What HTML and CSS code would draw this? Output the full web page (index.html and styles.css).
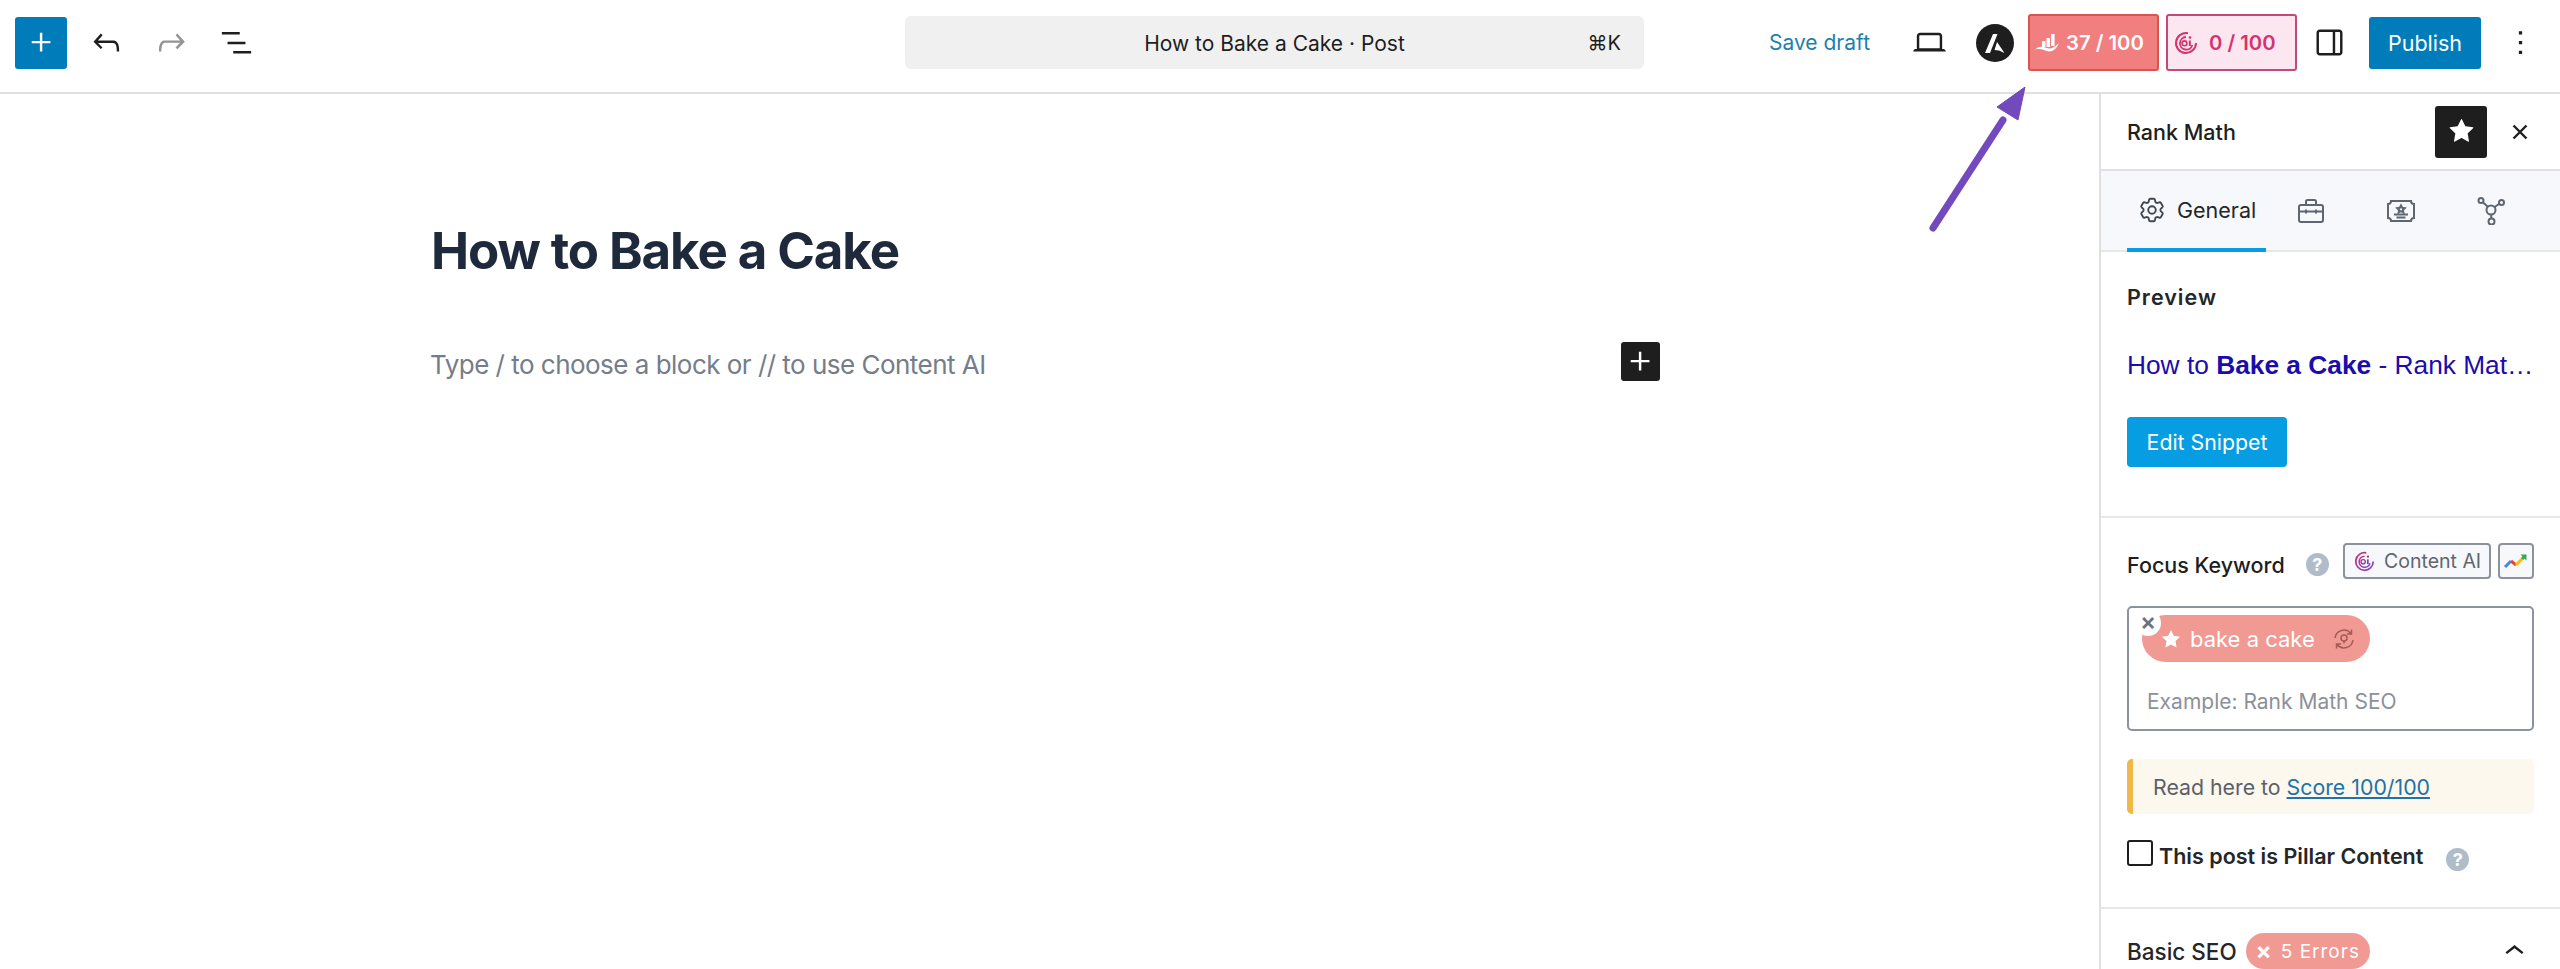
FILE: index.html
```html
<!DOCTYPE html>
<html lang="en">
<head>
<meta charset="utf-8">
<title>How to Bake a Cake</title>
<link rel="stylesheet" href="styles.css">
</head>
<body>
<div class="app">
  <header class="topbar">
    <div class="tools">
      <button class="tb-btn tb-primary"><svg viewBox="0 0 24 24" class="ic39"><path d="M11 12.5V17.5H12.5V12.5H17.5V11H12.5V6H11V11H6V12.5H11Z"/></svg></button>
      <button class="tb-btn"><svg viewBox="0 0 24 24" class="ic39"><path d="M18.3 11.7c-.6-.6-1.4-.9-2.3-.9H6.7l2.9-3.3-1.1-1-4.5 5L8.5 16l1-1-2.7-2.7H16c.5 0 .9.2 1.3.5 1 1 1 3.4 1 4.5v.3h1.5v-.2c0-1.5 0-4.3-1.5-5.7z"/></svg></button>
      <button class="tb-btn tb-disabled"><svg viewBox="0 0 24 24" class="ic39"><path d="M15.6 6.5l-1.1 1 2.9 3.3H8c-.9 0-1.7.3-2.3.9-1.4 1.5-1.4 4.2-1.4 5.6v.2h1.5v-.3c0-1.1 0-3.5 1-4.5.3-.3.7-.5 1.3-.5h9.2L14.5 15l1.1 1.1 4.6-4.6-4.6-5z"/></svg></button>
      <button class="tb-btn"><svg viewBox="0 0 24 24" class="ic39"><path d="M3 5.5h11V7H3V5.5Zm3.5 6h11V13h-11v-1.5ZM21 17.3H10v1.5h11v-1.5Z"/></svg></button>
    </div>
    <div class="command">
      <span class="command-title">How to Bake a Cake · Post</span>
      <span class="command-key">⌘K</span>
    </div>
    <div class="actions">
      <span class="save">Save draft</span>
      <button class="tb-btn laptop"><svg viewBox="0 0 24 24" class="ic39"><path d="M20.5 16h-.7V8c0-1.1-.9-2-2-2H6.2c-1.1 0-2 .9-2 2v8h-.7c-.8 0-1.5.7-1.5 1.5h20c0-.8-.7-1.5-1.5-1.5zM5.7 8c0-.3.2-.5.5-.5h11.6c.3 0 .5.2.5.5v7.6H5.7V8z"/></svg></button>
      <svg class="astra" viewBox="0 0 38 38"><circle cx="19" cy="19" r="19" fill="#1e1e1e"/><path d="M17 10h4.500L14 29H9ZM21 18l7.500 11-5.500-2.500-4.500-.5Z" fill="#fff"/></svg>
      <div class="score score-red">
        <svg viewBox="0 0 24 18" class="rm-logo"><path d="M7 7h3.500v6H7zM11.500 4h3.500v9h-3.500zM16 0h3.600v12H16z" fill="#fff"/><path d="M0 15.500c4-3.500 8-3 11.500-1.500 4.500 1.500 8-.5 12.500-5-3 7-7.500 9.500-12.500 8C8 15.500 5 14.500 0 15.500Z" fill="#fff"/></svg>
        <span>37 / 100</span>
      </div>
      <div class="score score-pink">
        <svg viewBox="0 0 24 24" class="ai-logo"><path d="M14 2.200A10 10 0 1 0 22 12" fill="none" stroke="#d6336c" stroke-width="2"/><path d="M12 6A6.300 6.300 0 1 0 18.300 14" fill="none" stroke="#d6336c" stroke-width="1.800"/><circle cx="10.500" cy="12.300" r="2.400" fill="none" stroke="#d6336c" stroke-width="1.600"/><path d="M15.800 9.500v5.500" stroke="#d6336c" stroke-width="2"/><circle cx="16" cy="6.500" r="1.300" fill="#d6336c"/></svg>
        <span>0 / 100</span>
      </div>
      <button class="tb-btn"><svg viewBox="0 0 24 24" class="ic39"><path d="M18 4H6c-1.100 0-2 .9-2 2v12c0 1.100.9 2 2 2h12c1.100 0 2-.9 2-2V6c0-1.100-.9-2-2-2zm-4 14.500H6c-.3 0-.5-.2-.5-.5V6c0-.3.2-.5.5-.5h8v13zm4.500-.5c0 .3-.2.500-.5.500h-2.500v-13H18c.3 0 .5.200.5.500v12z"/></svg></button>
      <button class="publish">Publish</button>
      <button class="tb-btn"><svg viewBox="0 0 24 24" class="ic39"><path d="M13 19h-2v-2h2v2zm0-6h-2v-2h2v2zm0-6h-2V5h2v2z"/></svg></button>
    </div>
  </header>

  <div class="body">
    <main class="editor">
      <h1 class="post-title">How to Bake a Cake</h1>
      <div class="empty-block">
        <p class="placeholder">Type / to choose a block or // to use Content AI</p>
        <button class="block-add"><svg viewBox="0 0 24 24" class="ic39"><path d="M11 12.5V17.5H12.5V12.5H17.5V11H12.5V6H11V11H6V12.5H11Z"/></svg></button>
      </div>
    </main>

    <aside class="sidebar">
      <div class="side-head">
        <span class="side-name">Rank Math</span>
        <button class="star-btn"><svg viewBox="0 0 24 24" class="ic39"><path d="M11.776 4.454a.25.25 0 01.448 0l2.069 4.192a.25.25 0 00.188.137l4.626.672a.25.25 0 01.139.426l-3.348 3.263a.25.25 0 00-.072.222l.79 4.607a.25.25 0 01-.362.263l-4.138-2.175a.25.25 0 00-.232 0l-4.138 2.175a.25.25 0 01-.363-.263l.79-4.607a.25.25 0 00-.071-.222L4.754 9.881a.25.25 0 01.139-.426l4.626-.672a.25.25 0 00.188-.137l2.069-4.192z"/></svg></button>
        <button class="close-btn"><svg viewBox="0 0 16 16" class="close-ic"><path d="M1.500 1.500l13 13M14.500 1.500l-13 13"/></svg></button>
      </div>

      <nav class="tabs">
        <div class="tab tab-active">
          <svg viewBox="0 0 24 24" class="tab-ic"><path d="M9.594 3.940c.09-.542.56-.94 1.110-.94h2.593c.55 0 1.020.398 1.110.94l.213 1.281c.063.374.313.686.645.870.074.040.147.083.22.127.324.196.72.257 1.075.124l1.217-.456a1.125 1.125 0 011.370.49l1.296 2.247a1.125 1.125 0 01-.26 1.431l-1.003.827c-.293.24-.438.613-.431.992a6.759 6.759 0 010 .255c-.007.378.138.75.43.99l1.005.828c.424.35.534.954.26 1.430l-1.298 2.247a1.125 1.125 0 01-1.369.491l-1.217-.456c-.355-.133-.75-.072-1.076.124a6.570 6.570 0 01-.22.128c-.331.183-.581.495-.644.869l-.213 1.280c-.09.543-.56.941-1.110.941h-2.594c-.55 0-1.020-.398-1.110-.94l-.213-1.281c-.062-.374-.312-.686-.644-.87a6.520 6.520 0 01-.22-.127c-.325-.196-.72-.257-1.076-.124l-1.217.456a1.125 1.125 0 01-1.369-.49l-1.297-2.247a1.125 1.125 0 01.26-1.431l1.004-.827c.292-.24.437-.613.43-.992a6.932 6.932 0 010-.255c.007-.378-.138-.75-.43-.99l-1.004-.828a1.125 1.125 0 01-.26-1.430l1.297-2.247a1.125 1.125 0 011.370-.491l1.216.456c.356.133.751.072 1.076-.124.072-.044.146-.087.22-.128.332-.183.582-.495.644-.869l.214-1.281z"/><circle cx="12" cy="12" r="3"/></svg>
          <span>General</span>
        </div>
        <div class="tab-icon">
          <svg viewBox="0 0 28 26" class="tab-ic2"><rect x="2" y="7" width="24" height="17" rx="2"/><path d="M9 7V3.500A1.500 1.500 0 0 1 10.500 2h7A1.500 1.500 0 0 1 19 3.500V7M2 13.500h24M9 11.500v4M19 11.500v4"/></svg>
        </div>
        <div class="tab-icon">
          <svg viewBox="0 0 30 24" class="tab-ic3"><path d="M5 2h20a3 3 0 0 0 3 3v14a3 3 0 0 0-3 3H5a3 3 0 0 0-3-3V5a3 3 0 0 0 3-3Z"/><path d="M15 6.500l1.200 2.300 2.500.4-1.800 1.700.4 2.400-2.300-1.200-2.300 1.200.4-2.400-1.800-1.700 2.500-.4ZM8 15.500h14M10.500 18.500h9"/></svg>
        </div>
        <div class="tab-icon">
          <svg viewBox="0 0 28 28" class="tab-ic4"><circle cx="14" cy="13" r="4.500"/><circle cx="4" cy="3.500" r="2.500"/><circle cx="24.500" cy="5.500" r="2.500"/><circle cx="14.500" cy="24.500" r="3"/><path d="M5.800 5.200l5 4.500M22.300 6.800l-5 3.500M14.200 17.500v4"/></svg>
        </div>
      </nav>

      <section class="panel panel-preview">
        <h2 class="preview-h">Preview</h2>
        <div class="serp">How to <b>Bake a Cake</b> - Rank Mat…</div>
        <button class="edit-btn">Edit Snippet</button>
      </section>

      <section class="panel panel-focus">
        <div class="focus-row">
          <span class="focus-label">Focus Keyword</span>
          <span class="help help-a">?</span>
          <button class="cai-btn">
            <svg viewBox="0 0 24 24" class="cai-logo"><defs><linearGradient id="g1" x1="0" y1="0" x2="1" y2="1"><stop offset="0" stop-color="#d1267c"/><stop offset="1" stop-color="#7c4dca"/></linearGradient></defs><path d="M14 2.200A10 10 0 1 0 22 12" fill="none" stroke="url(#g1)" stroke-width="2"/><path d="M12 6A6.300 6.300 0 1 0 18.300 14" fill="none" stroke="url(#g1)" stroke-width="1.800"/><circle cx="10.500" cy="12.300" r="2.400" fill="none" stroke="#8b3bab" stroke-width="1.600"/><path d="M15.800 9.500v5.500" stroke="#8b3bab" stroke-width="2"/><circle cx="16" cy="6.500" r="1.300" fill="#a0309b"/></svg>
            <span>Content AI</span>
          </button>
          <button class="trend-btn">
            <svg viewBox="0 0 26 18" class="trend"><path d="M2 15l6-6" stroke="#4285f4"/><path d="M8 9l5 4" stroke="#ea4335"/><path d="M13 13l6-6" stroke="#fbbc04"/><path d="M19 7l3-3" stroke="#34a853"/><path d="M17.500 2.500h6v6z" fill="#34a853" stroke="none"/></svg>
          </button>
        </div>
        <div class="kw-box">
          <div class="pill">
            <span class="pill-x">×</span>
            <svg viewBox="0 0 24 24" class="pill-star"><path d="M12 3l2.800 5.800 6.300.9-4.600 4.400 1.100 6.300L12 17.400 6.400 20.400l1.100-6.300L2.900 9.700l6.300-.9z"/></svg>
            <span class="pill-text">bake a cake</span>
            <svg viewBox="0 0 24 24" class="pill-sync"><path d="M3 11a9 9 0 0 1 16-4.500M21 13a9 9 0 0 1-16 4.500M19.500 2.500v4.500H15M4.500 21.500V17H9"/><circle cx="12" cy="11" r="3"/><path d="M12 14v2.500"/></svg>
          </div>
          <div class="kw-placeholder">Example: Rank Math SEO</div>
        </div>
        <div class="notice">Read here to <a href="#">Score 100/100</a></div>
        <div class="pillar">
          <span class="check"></span>
          <span class="pillar-text">This post is Pillar Content</span>
          <span class="help help-b">?</span>
        </div>
      </section>

      <section class="panel-seo">
        <span class="seo-name">Basic SEO</span>
        <span class="err-pill"><i>×</i> 5 Errors</span>
        <svg viewBox="0 0 24 24" class="chev"><path d="M6.500 12.400L12 8l5.500 4.400-.9 1.200L12 10l-4.600 3.600z"/></svg>
      </section>
    </aside>
  </div>

  <svg class="arrow" viewBox="0 0 120 170" aria-hidden="true"><path d="M8 166L78 58" stroke="#7349bd" stroke-width="7" stroke-linecap="round" fill="none"/><path d="M100 25L72 45 93 58Z" fill="#7349bd" stroke="#7349bd" stroke-width="1"/></svg>
</div>
</body>
</html>
```

FILE: styles.css
```css
* { box-sizing: border-box; }
html, body { margin: 0; padding: 0; height: 100%; overflow: hidden; background: #fff; }
body { font-family: Inter, "Liberation Sans", sans-serif; color: #1e1e1e; -webkit-font-smoothing: antialiased; }
button { font: inherit; border: 0; background: none; padding: 0; margin: 0; color: inherit; }
h1, h2, p { margin: 0; }
svg { display: block; }
.ic39 { width: 39px; height: 39px; fill: currentColor; }

.app { position: relative; height: 969px; display: flex; flex-direction: column; }

.topbar { height: 94px; flex: none; border-bottom: 2px solid #e0e0e0; display: flex; align-items: center; padding: 0 14px 7px 15px; }
.tools { display: flex; gap: 13px; width: 890px; flex: none; }
.tb-btn { width: 52px; height: 52px; flex: none; display: flex; align-items: center; justify-content: center; border-radius: 3px; color: #1e1e1e; }
.tb-primary { background: #007cba; color: #fff; }
.tb-disabled { color: #949494; }

.command { width: 739px; height: 53px; flex: none; background: #f0f0f0; border-radius: 6px; display: flex; align-items: center; position: relative; justify-content: center; font-size: 21px; padding-top: 1px; }
.command-title { color: #1e1e1e; }
.command-key { position: absolute; right: 23px; font-size: 20px; color: #1e1e1e; }

.actions { margin-left: auto; display: flex; align-items: center; }
.save { font-size: 21px; color: #1e7fae; margin-right: 33px; }
.laptop { margin-right: 21px; }
.astra { width: 38px; height: 38px; margin-right: 14px; flex: none; }
.score { width: 131px; height: 57px; border-radius: 3px; display: flex; align-items: center; font-size: 20.300px; font-weight: 600; border: 2px solid; }
.score-red { background: #f17f7f; border-color: #d9534f; color: #fff; padding-left: 5px; margin-right: 7px; }
.rm-logo { width: 24px; height: 18px; margin-right: 7px; flex: none; }
.score-pink { background: #fce6ef; border-color: #c4487e; color: #d6336c; padding-left: 6px; margin-right: 6px; }
.ai-logo { width: 24px; height: 24px; margin-right: 11px; flex: none; }
.publish { width: 112px; height: 52px; margin: 0 13px 0 14px; background: #007cba; color: #fff; border-radius: 3px; font-size: 21.500px; }

.body { flex: 1; display: flex; min-height: 0; }
.editor { flex: 1; padding: 125px 0 0 430px; min-width: 0; }
.post-title { font-size: 51px; line-height: 64px; font-weight: 700; color: #1e293b; letter-spacing: -1.100px; padding-left: 1px; }
.empty-block { margin-top: 59px; width: 1230px; display: flex; align-items: flex-start; justify-content: space-between; }
.placeholder { font-size: 26px; line-height: 42px; color: #757d8a; letter-spacing: -.52px; margin-top: 2px; }
.block-add { width: 39px; height: 39px; background: #1e1e1e; color: #fff; border-radius: 3px; display: flex; align-items: center; justify-content: center; }

.sidebar { width: 461px; flex: none; border-left: 2px solid #e0e0e0; display: flex; flex-direction: column; overflow: hidden; }
.side-head { height: 77px; flex: none; border-bottom: 2px solid #e0e0e0; display: flex; align-items: center; padding: 0 14px 0 26px; }
.side-name { font-size: 21.500px; font-weight: 500; flex: 1; }
.star-btn { width: 52px; height: 52px; background: #1e1e1e; color: #fff; border-radius: 3px; display: flex; align-items: center; justify-content: center; margin-right: 7px; }
.close-btn { width: 52px; height: 52px; display: flex; align-items: center; justify-content: center; }
.close-ic { width: 16px; height: 16px; fill: none; stroke: #1e1e1e; stroke-width: 2.400; }

.tabs { height: 81px; flex: none; background: #f6f8fb; border-bottom: 2px solid #e5e7eb; display: flex; position: relative; }
.tab { width: 139px; margin-left: 26px; padding-left: 10px; display: flex; align-items: center; gap: 10px; font-size: 21.500px; border-bottom: 4px solid #069de3; height: 81px; color: #242628; }
.tab-ic { width: 30px; height: 30px; fill: none; stroke: #3f4750; stroke-width: 1.500; flex: none; }
.tab-icon { width: 90px; display: flex; align-items: center; justify-content: center; }
.tab-ic2, .tab-ic3, .tab-ic4 { fill: none; stroke: #5f6670; stroke-width: 2; }
.tab-ic2 { width: 28px; height: 26px; }
.tab-ic3 { width: 30px; height: 24px; }
.tab-ic4 { width: 28px; height: 28px; }

.panel { padding: 0 26px; border-bottom: 2px solid #e5e7eb; }
.panel-preview { height: 267px; padding-top: 32px; }
.preview-h { font-size: 21.500px; font-weight: 600; line-height: 26px; letter-spacing: 1px; color: #242628; }
.serp { margin-top: 38px; font-family: "Liberation Sans", Arial, sans-serif; font-size: 26.300px; line-height: 34px; color: #1a0dab; white-space: nowrap; }
.edit-btn { margin-top: 35px; width: 160px; height: 50px; background: #069de3; color: #fff; border-radius: 4px; font-size: 21.300px; display: block; }

.panel-focus { height: 392px; padding-top: 25px; }
.focus-row { display: flex; align-items: flex-start; height: 35px; }
.focus-label { font-size: 21.500px; font-weight: 500; margin-top: 9px; line-height: 26px; white-space: nowrap; }
.help { width: 23px; height: 23px; border-radius: 50%; background: #b0bdc9; color: #fff; font-size: 18px; font-weight: 700; display: flex; align-items: center; justify-content: center; flex: none; }
.help-a { margin: 10px 0 0 21px; }
.cai-btn { margin-left: auto; width: 148px; height: 36px; border: 2px solid #8c939c; border-radius: 4px; background: #f6f8fb; display: flex; align-items: center; padding-left: 9px; gap: 9px; font-size: 19.500px; color: #5f6670; white-space: nowrap; }
.cai-logo { width: 21px; height: 21px; flex: none; }
.trend-btn { margin-left: 7px; width: 36px; height: 36px; border: 2px solid #8c939c; border-radius: 4px; background: #f6f8fb; display: flex; align-items: center; justify-content: center; flex: none; }
.trend { width: 26px; height: 18px; fill: none; stroke-width: 3; }

.kw-box { margin-top: 28px; height: 125px; border: 2px solid #8c939c; border-radius: 5px; padding: 7px 13px 0; }
.pill { position: relative; width: 228px; height: 47px; border-radius: 24px; background: #f09a93; display: flex; align-items: center; padding-left: 17px; color: #fff; font-size: 22px; }
.pill-x { position: absolute; left: -7px; top: -5px; width: 26px; height: 26px; border-radius: 50%; background: #fff; color: #6b7280; font-size: 24px; line-height: 24px; font-weight: 600; text-align: center; }
.pill-star { width: 24px; height: 24px; fill: #fff; margin-right: 7px; flex: none; }
.pill-text { flex: none; }
.pill-sync { width: 24px; height: 24px; margin-left: 17px; fill: none; stroke: #a65a55; stroke-width: 1.500; flex: none; }
.kw-placeholder { margin-top: 27px; padding-left: 5px; font-size: 21px; line-height: 26px; color: #8c9199; }

.notice { margin-top: 28px; height: 55px; background: #fdf8ee; border-left: 6px solid #f0b849; border-radius: 5px; padding-left: 20px; display: flex; align-items: center; font-size: 21.300px; color: #5b6068; white-space: pre; }
.notice a { color: #2272a8; }
.pillar { margin-top: 26px; display: flex; align-items: flex-start; height: 36px; }
.check { width: 26px; height: 26px; border: 2px solid #1e1e1e; border-radius: 3px; flex: none; background: #fff; }
.pillar-text { margin: 3px 0 0 6px; font-size: 21.500px; font-weight: 600; line-height: 26px; color: #242628; }
.help-b { margin: 8px 0 0 23px; }

.panel-seo { height: 60px; padding: 28px 26px 0; display: flex; align-items: flex-start; position: relative; }
.seo-name { font-size: 22.500px; font-weight: 500; line-height: 30px; color: #242628; }
.err-pill { margin: -4px 0 0 9px; width: 124px; height: 36px; border-radius: 18px; background: #f09a93; color: #fff; font-size: 19px; letter-spacing: 1px; display: flex; align-items: center; justify-content: center; }
.err-pill i { font-style: normal; font-weight: 700; font-size: 24px; margin-right: 8px; line-height: 24px; }
.chev { width: 39px; height: 39px; margin-left: auto; margin-right: 0; fill: #1e1e1e; margin-top: -5px; }

.arrow { position: absolute; left: 1925px; top: 62px; width: 120px; height: 170px; }
```
